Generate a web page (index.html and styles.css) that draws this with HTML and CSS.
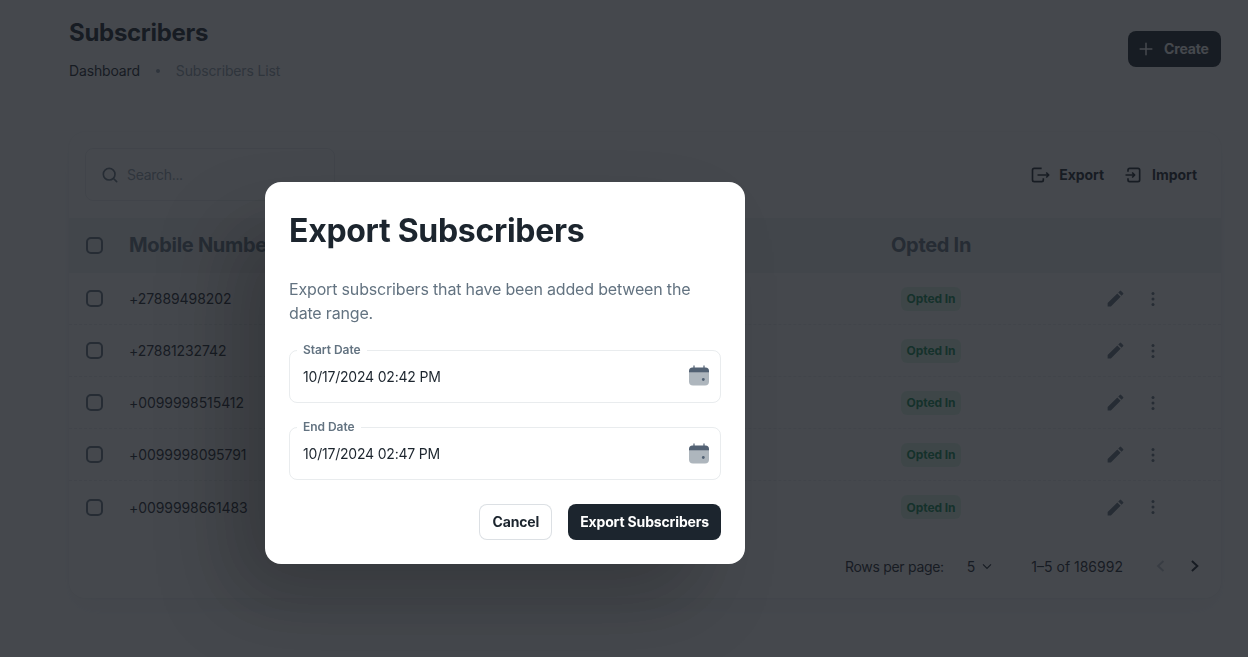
FILE: index.html
```html
<!DOCTYPE html>
<html lang="en">
<head>
<meta charset="utf-8">
<title>Subscribers</title>
<link rel="stylesheet" href="styles.css">
</head>
<body>
<main class="page">
  <header class="page-head">
    <div>
      <h1 class="page-title">Subscribers</h1>
      <nav class="crumbs"><span class="crumb-link">Dashboard</span><span class="crumb-dot"></span><span class="crumb-current">Subscribers List</span></nav>
    </div>
    <button class="btn-create"><svg viewBox="0 0 24 24" width="20" height="20"><path d="M12 5v14M5 12h14" fill="none" stroke="currentColor" stroke-width="1.8" stroke-linecap="round"/></svg><span>Create</span></button>
  </header>
  <section class="card">
    <div class="toolbar">
      <div class="search">
        <svg viewBox="0 0 24 24" width="20" height="20"><circle cx="11" cy="11" r="7" fill="none" stroke="currentColor" stroke-width="2"/><path d="M16.5 16.5 20 20" fill="none" stroke="currentColor" stroke-width="2" stroke-linecap="round"/></svg>
        <span>Search...</span>
      </div>
      <div class="tools">
        <span class="tool"><svg viewBox="0 0 24 24" width="20" height="20"><path d="M14 4H5a2 2 0 0 0-2 2v12a2 2 0 0 0 2 2h9a2 2 0 0 0 2-2v-2M9 12h13M19.500 9l3 3-3 3" fill="none" stroke="currentColor" stroke-width="2" stroke-linejoin="round"/></svg>Export</span>
        <span class="tool"><svg viewBox="0 0 24 24" width="20" height="20"><path d="M6 8V6a2 2 0 0 1 2-2h10a2 2 0 0 1 2 2v12a2 2 0 0 1-2 2H8a2 2 0 0 1-2-2v-2M3 12h11M11 9l3 3-3 3" fill="none" stroke="currentColor" stroke-width="2" stroke-linejoin="round"/></svg>Import</span>
      </div>
    </div>
    <div class="row row-head">
      <span class="box"></span><span class="cell-num">Mobile Number</span><span class="cell-status">Opted In</span><span></span>
    </div>
    <div class="row"><span class="box"></span><span class="cell-num">+27889498202</span><span class="cell-status"><span class="badge">Opted In</span></span><span class="actions"><svg viewBox="0 0 24 24" width="21" height="21"><path d="M3 17.25V21h3.75L17.81 9.94l-3.75-3.75L3 17.25zM20.71 7.04a1 1 0 0 0 0-1.41l-2.34-2.34a1 1 0 0 0-1.41 0l-1.83 1.83 3.75 3.75 1.83-1.83z" fill="currentColor"/></svg><svg viewBox="0 0 24 24" width="20" height="20"><circle cx="12" cy="5.500" r="1.800" fill="currentColor"/><circle cx="12" cy="12" r="1.800" fill="currentColor"/><circle cx="12" cy="18.500" r="1.800" fill="currentColor"/></svg></span></div>
    <div class="row"><span class="box"></span><span class="cell-num">+27881232742</span><span class="cell-status"><span class="badge">Opted In</span></span><span class="actions"><svg viewBox="0 0 24 24" width="21" height="21"><path d="M3 17.25V21h3.75L17.81 9.94l-3.75-3.75L3 17.25zM20.71 7.04a1 1 0 0 0 0-1.41l-2.34-2.34a1 1 0 0 0-1.41 0l-1.83 1.83 3.75 3.75 1.83-1.83z" fill="currentColor"/></svg><svg viewBox="0 0 24 24" width="20" height="20"><circle cx="12" cy="5.500" r="1.800" fill="currentColor"/><circle cx="12" cy="12" r="1.800" fill="currentColor"/><circle cx="12" cy="18.500" r="1.800" fill="currentColor"/></svg></span></div>
    <div class="row"><span class="box"></span><span class="cell-num">+0099998515412</span><span class="cell-status"><span class="badge">Opted In</span></span><span class="actions"><svg viewBox="0 0 24 24" width="21" height="21"><path d="M3 17.25V21h3.75L17.81 9.94l-3.75-3.75L3 17.25zM20.71 7.04a1 1 0 0 0 0-1.41l-2.34-2.34a1 1 0 0 0-1.41 0l-1.83 1.83 3.75 3.75 1.83-1.83z" fill="currentColor"/></svg><svg viewBox="0 0 24 24" width="20" height="20"><circle cx="12" cy="5.500" r="1.800" fill="currentColor"/><circle cx="12" cy="12" r="1.800" fill="currentColor"/><circle cx="12" cy="18.500" r="1.800" fill="currentColor"/></svg></span></div>
    <div class="row"><span class="box"></span><span class="cell-num">+0099998095791</span><span class="cell-status"><span class="badge">Opted In</span></span><span class="actions"><svg viewBox="0 0 24 24" width="21" height="21"><path d="M3 17.25V21h3.75L17.81 9.94l-3.75-3.75L3 17.25zM20.71 7.04a1 1 0 0 0 0-1.41l-2.34-2.34a1 1 0 0 0-1.41 0l-1.83 1.83 3.75 3.75 1.83-1.83z" fill="currentColor"/></svg><svg viewBox="0 0 24 24" width="20" height="20"><circle cx="12" cy="5.500" r="1.800" fill="currentColor"/><circle cx="12" cy="12" r="1.800" fill="currentColor"/><circle cx="12" cy="18.500" r="1.800" fill="currentColor"/></svg></span></div>
    <div class="row"><span class="box"></span><span class="cell-num">+0099998661483</span><span class="cell-status"><span class="badge">Opted In</span></span><span class="actions"><svg viewBox="0 0 24 24" width="21" height="21"><path d="M3 17.25V21h3.75L17.81 9.94l-3.75-3.75L3 17.25zM20.71 7.04a1 1 0 0 0 0-1.41l-2.34-2.34a1 1 0 0 0-1.41 0l-1.83 1.83 3.75 3.75 1.83-1.83z" fill="currentColor"/></svg><svg viewBox="0 0 24 24" width="20" height="20"><circle cx="12" cy="5.500" r="1.800" fill="currentColor"/><circle cx="12" cy="12" r="1.800" fill="currentColor"/><circle cx="12" cy="18.500" r="1.800" fill="currentColor"/></svg></span></div>
    <div class="pager">
      <span class="rows-label">Rows per page:</span>
      <span class="rows-val">5<svg viewBox="0 0 24 24" width="16" height="16"><path d="m6 9.500 6 6 6-6" fill="none" stroke="currentColor" stroke-width="1.800"/></svg></span>
      <span class="range">1–5 of 186992</span>
      <svg class="prev" viewBox="0 0 24 24" width="20" height="20"><path d="M15 6l-6.500 6 6.500 6" fill="none" stroke="currentColor" stroke-width="2.400"/></svg>
      <svg class="next" viewBox="0 0 24 24" width="20" height="20"><path d="M9.500 6l6.500 6-6.500 6" fill="none" stroke="currentColor" stroke-width="2.400"/></svg>
    </div>
  </section>
</main>
<div class="overlay">
  <div class="dialog">
    <h2 class="dialog-title">Export Subscribers</h2>
    <p class="dialog-text">Export subscribers that have been added between the date range.</p>
    <div class="field">
      <span class="field-label">Start Date</span>
      <span class="field-val">10/17/2024 02:42 PM</span>
      <svg viewBox="0 0 24 24" width="24" height="24"><path d="M2 8.500V17.500a4 4 0 0 0 4 4h12a4 4 0 0 0 4-4V8.500z" fill="#637381" opacity=".52"/><path d="M2 8.500V7a3.500 3.500 0 0 1 3.500-3.500h.9V1.500h1.200v2h8.800v-2h1.200v2h.9A3.500 3.500 0 0 1 22 7v1.500z" fill="#526173"/><circle cx="16.300" cy="15.500" r="1.400" fill="#526173"/></svg>
    </div>
    <div class="field">
      <span class="field-label">End Date</span>
      <span class="field-val">10/17/2024 02:47 PM</span>
      <svg viewBox="0 0 24 24" width="24" height="24"><path d="M2 8.500V17.500a4 4 0 0 0 4 4h12a4 4 0 0 0 4-4V8.500z" fill="#637381" opacity=".52"/><path d="M2 8.500V7a3.500 3.500 0 0 1 3.500-3.500h.9V1.500h1.200v2h8.800v-2h1.200v2h.9A3.500 3.500 0 0 1 22 7v1.500z" fill="#526173"/><circle cx="16.300" cy="15.500" r="1.400" fill="#526173"/></svg>
    </div>
    <div class="dialog-actions">
      <button class="btn btn-outline">Cancel</button>
      <button class="btn btn-dark">Export Subscribers</button>
    </div>
  </div>
</div>
</body>
</html>
```
FILE: styles.css
```css
* { box-sizing: border-box; }
html, body { margin: 0; height: 100%; overflow: hidden; }
body { background: #fff; font-family: Inter, "Liberation Sans", sans-serif; color: #1c252e; }
button { font-family: inherit; cursor: pointer; }
svg { flex-shrink: 0; }
.page { padding: 0 27px 0 69px; }
.page-head { display: flex; justify-content: space-between; align-items: flex-start; height: 132px; padding-top: 18px; }
.page-title { margin: 0; font-size: 24px; line-height: 30px; font-weight: 700; letter-spacing: -.3px; }
.crumbs { display: flex; align-items: center; gap: 16px; margin-top: 12px; font-size: 14px; line-height: 22px; letter-spacing: -.15px; }
.crumb-dot { width: 4px; height: 4px; border-radius: 50%; background: #919eab; }
.crumb-current { color: #919eab; }
.btn-create { display: flex; align-items: center; gap: 8px; margin-top: 13px; height: 36px; width: 93px; padding: 0 0 1px 8px; border: 0; border-radius: 8px; background: #1c252e; color: #fff; font-size: 14px; font-weight: 700; letter-spacing: -.15px; }
.card { height: 466px; background: #fff; border-radius: 16px; box-shadow: 0 0 2px rgba(145,158,171,.2), 0 12px 24px -4px rgba(145,158,171,.12); }
.toolbar { display: flex; justify-content: space-between; align-items: center; height: 86px; padding: 16px 24px 17px 16px; }
.search { display: flex; align-items: center; gap: 7px; width: 250px; height: 53px; padding: 0 14px; border: 1px solid rgba(145,158,171,.2); border-radius: 8px; color: #637381; font-size: 14px; }
.search span { color: #919eab; letter-spacing: -.3px; }
.tools { display: flex; gap: 19px; }
.tool { display: flex; align-items: center; gap: 9px; font-size: 14px; font-weight: 700; letter-spacing: -.05px; }
.row { display: grid; grid-template-columns: 60px 1fr 214px 116px; align-items: center; height: 52px; font-size: 14px; letter-spacing: -.08px; border-bottom: 1px dashed rgba(145,158,171,.2); }
.row:nth-last-child(2) { border-bottom: 0; }
.row-head { height: 55px; padding-bottom: 1px; background: #f1f3f3; font-size: 20px; font-weight: 700; color: #637381; border-bottom: 0; letter-spacing: -.3px; }
.box { width: 17px; height: 17px; margin-left: 17px; border: 2px solid #637381; border-radius: 5px; }
.badge { display: inline-flex; align-items: center; justify-content: center; width: 60px; height: 24px; margin-left: 10px; border-radius: 6px; background: rgba(34,197,94,.16); color: #118d57; font-size: 12px; font-weight: 700; letter-spacing: -.05px; }
.actions { display: flex; align-items: center; gap: 17px; color: #637381; }
.pager { display: flex; align-items: center; height: 65px; padding: 1px 0 0 776px; font-size: 14px; color: #1c252e; }
.rows-label { letter-spacing: -.3px; }
.rows-val { display: flex; align-items: center; gap: 4px; margin-left: 23px; }
.range { margin-left: 36px; }
.prev { margin-left: 28px; color: #919eab; opacity: .6; }
.next { margin-left: 13px; }
.overlay { position: fixed; inset: 0; display: flex; align-items: flex-start; justify-content: flex-start; background: rgba(22,26,32,.8); }
.dialog { margin: 182px 0 0 265px; width: 480px; height: 382px; padding: 24px; background: #fff; border-radius: 16px; box-shadow: -40px 40px 80px -8px rgba(0,0,0,.24); }
.dialog-title { margin: 1px 0 0; font-size: 32px; line-height: 48px; font-weight: 700; letter-spacing: -.3px; }
.dialog-text { margin: 22px 0 0; font-size: 16px; line-height: 24px; color: #637381; letter-spacing: -.17px; }
.field { position: relative; display: flex; align-items: center; justify-content: space-between; height: 53px; margin-top: 24.7px; padding: 0 9px 0 13px; border: 1px solid rgba(145,158,171,.2); border-radius: 8px; font-size: 14px; letter-spacing: -.2px; }
.field + .field { margin-top: 24.5px; }
.field-label { position: absolute; left: 7px; top: -8px; padding: 0 6px; background: #fff; font-size: 12px; line-height: 14px; font-weight: 600; color: #637381; letter-spacing: -.05px; }
.dialog-actions { display: flex; justify-content: flex-end; gap: 16px; margin-top: 23.8px; }
.btn { height: 36px; padding: 0 12px 1px; border-radius: 8px; font-size: 14px; font-weight: 700; letter-spacing: -.15px; }
.btn-outline { background: #fff; border: 1px solid rgba(145,158,171,.32); color: #1c252e; }
.btn-dark { background: #1c252e; border: 0; color: #fff; }
```
